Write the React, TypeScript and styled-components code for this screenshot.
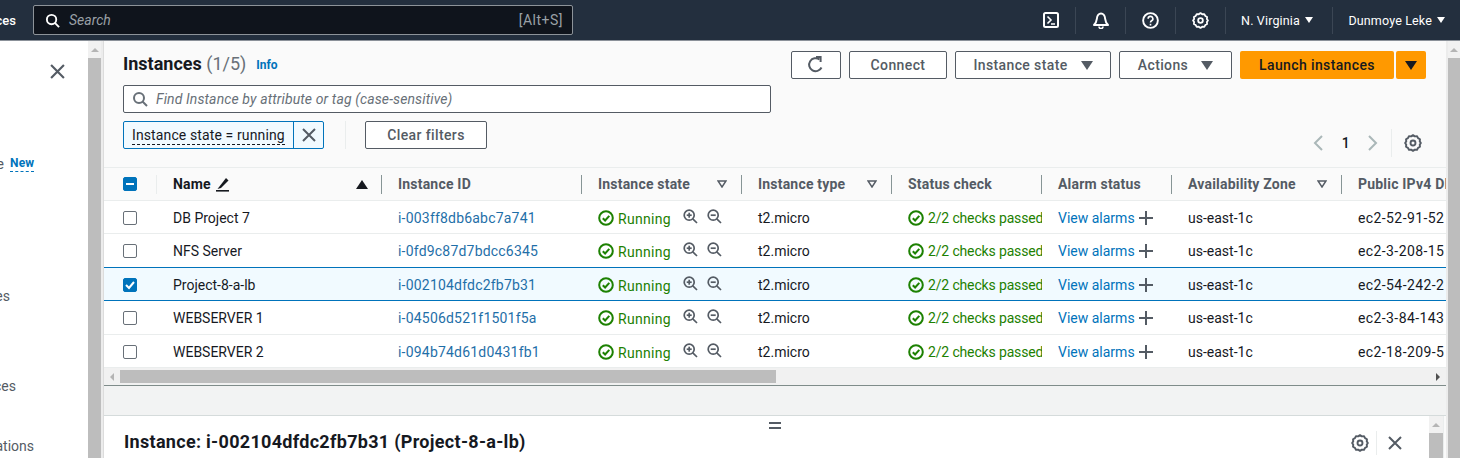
import React from "react";
import styled, { createGlobalStyle } from "styled-components";

const Global = createGlobalStyle`
  html, body { margin: 0; padding: 0; background: #fff; }
  body { font-family: Roboto, "Noto Sans", sans-serif; font-size: 14px; color: #16191f; }
  #root { width: 1460px; height: 458px; overflow: hidden; }
  * { box-sizing: border-box; }
  svg { flex: none; }
`;

const Page = styled.div`
  width: 1460px;
  height: 458px;
  display: flex;
  flex-direction: column;
  overflow: hidden;
`;

/* ---------- top nav ---------- */
const TopNav = styled.header`
  flex: 0 0 41px;
  height: 41px;
  background: #232f3e;
  border-bottom: 1px solid #8b9199;
  display: flex;
  align-items: center;
  color: #fff;
`;
const ClippedService = styled.div`
  width: 16px;
  margin-right: 17px;
  overflow: hidden;
  display: flex;
  justify-content: flex-end;
  font-size: 13px;
  font-weight: 500;
  white-space: nowrap;
`;
const SearchBox = styled.div`
  width: 540px;
  height: 30px;
  background: #0f141c;
  border: 1px solid #8d9399;
  border-radius: 2px;
  display: flex;
  align-items: center;
  padding: 0 9px 0 11px;
  gap: 9px;
  color: #9aa0a6;
  font-size: 14px;
`;
const SearchHint = styled.span`
  font-style: italic;
  flex: 1;
`;
const Shortcut = styled.span`
  color: #9aa0a6;
  font-size: 14px;
  letter-spacing: 0.5px;
`;
const NavRight = styled.div`
  margin-left: auto;
  display: flex;
  align-items: center;
  height: 100%;
  padding-right: 15px;
`;
const NavIcon = styled.div`
  width: 50px;
  height: 27px;
  display: flex;
  align-items: center;
  justify-content: center;
  border-right: 1px solid #3b4654;
`;
const NavMenu = styled.div<{ $w: number; $last?: boolean }>`
  width: ${(p) => p.$w}px;
  height: 27px;
  display: flex;
  align-items: center;
  justify-content: flex-end;
  gap: 5px;
  padding-right: ${(p) => (p.$last ? 0 : 19)}px;
  border-right: ${(p) => (p.$last ? "none" : "1px solid #3b4654")};
  font-size: 12.5px;
  font-weight: 400;
  letter-spacing: 0.15px;
  white-space: nowrap;
`;

/* ---------- body ---------- */
const Body = styled.div`
  flex: 1;
  display: flex;
  min-height: 0;
`;
const Sidebar = styled.aside`
  flex: 0 0 88px;
  background: #fff;
  display: flex;
  flex-direction: column;
  overflow: hidden;
`;
const CloseSide = styled.div`
  height: 64px;
  padding: 23px 0 0 50px;
  color: #545b64;
  line-height: 0;
`;
const SideItem = styled.div<{ $top: number }>`
  margin-top: ${(p) => p.$top}px;
  height: 20px;
  line-height: 20px;
  font-size: 14px;
  color: #545b64;
  white-space: nowrap;
  display: flex;
  align-items: center;
`;
const SideClip = styled.span<{ $w: number }>`
  width: ${(p) => p.$w}px;
  overflow: hidden;
  display: inline-flex;
  justify-content: flex-end;
`;
const NewTag = styled.span`
  margin-left: 6px;
  color: #0073bb;
  font-size: 12px;
  font-weight: 700;
  letter-spacing: 0.2px;
  border-bottom: 1px dashed #0073bb;
  line-height: 15px;
`;
const VScroll = styled.div<{ $right?: boolean }>`
  flex: 0 0 ${(p) => (p.$right ? 14 : 15)}px;
  width: ${(p) => (p.$right ? 14 : 15)}px;
  background: #f1f1f1;
  border-style: solid;
  border-color: #ececec;
  border-width: 0 ${(p) => (p.$right ? "0 0 2px" : "2px 0 0")};
  display: flex;
  flex-direction: column;
  align-items: stretch;
`;
const VScrollArrow = styled.div`
  height: 17px;
  flex: none;
  display: flex;
  justify-content: center;
  align-items: center;
  &::before {
    content: "";
    border-left: 4px solid transparent;
    border-right: 4px solid transparent;
    border-bottom: 4px solid #b5b5b5;
  }
`;
const VScrollThumb = styled.div`
  flex: 1;
  background: #bdbdbd;
`;
const Main = styled.main`
  flex: 0 0 1343px;
  min-width: 0;
  background: #fafafa;
  display: flex;
  flex-direction: column;
  overflow: hidden;
  border-left: 1px solid #dcdcdc;
`;

/* ---------- toolbar ---------- */
const Toolbar = styled.div`
  height: 127px;
  flex: none;
  padding: 10px 20px 0 19px;
  display: grid;
  grid-template-columns: 648px 1fr;
  grid-template-rows: 34px 36px 36px;
`;
const TitleRow = styled.div`
  display: flex;
  align-items: center;
  padding-bottom: 10px;
  gap: 10px;
  grid-column: 1;
`;
const Title = styled.h1`
  margin: 0;
  font-size: 18px;
  font-weight: 700;
  color: #16191f;
  span { font-weight: 400; color: #687078; }
`;
const InfoLink = styled.a`
  font-size: 12px;
  font-weight: 700;
  color: #0073bb;
  padding-top: 3px;
`;
const Actions = styled.div`
  grid-column: 2;
  grid-row: 1;
  display: flex;
  justify-content: flex-end;
  gap: 8px;
  height: 28px;
  margin-left: 20px;
`;
const Btn = styled.button<{ $w: number }>`
  width: ${(p) => p.$w}px;
  height: 28px;
  background: #fff;
  border: 1px solid #545b64;
  border-radius: 2px;
  color: #545b64;
  font: 500 14px Roboto, sans-serif;
  letter-spacing: 0.38px;
  padding: 0;
  display: inline-flex;
  align-items: center;
  justify-content: center;
  gap: 13px;
`;
const LaunchGroup = styled.div`
  display: flex;
  gap: 2px;
`;
const Primary = styled(Btn)`
  background: #ff9900;
  border: none;
  color: #16191f;
`;
const Caret = styled.i<{ $c?: string; $s?: number }>`
  display: inline-block;
  width: 0;
  height: 0;
  border-left: ${(p) => p.$s ?? 6}px solid transparent;
  border-right: ${(p) => p.$s ?? 6}px solid transparent;
  border-top: ${(p) => (p.$s ?? 6) * 1.5}px solid ${(p) => p.$c ?? "#545b64"};
`;
const FindBox = styled.div`
  grid-column: 1;
  grid-row: 2;
  height: 28px;
  background: #fff;
  border: 1px solid #545b64;
  border-radius: 2px;
  display: flex;
  align-items: center;
  gap: 8px;
  padding: 0 8px;
  color: #687078;
  font-style: italic;
  letter-spacing: 0.12px;
`;
const FilterRow = styled.div`
  grid-column: 1;
  grid-row: 3;
  display: flex;
  align-items: flex-start;
`;
const Token = styled.div`
  width: 201px;
  height: 28px;
  background: #f1faff;
  border: 1px solid #0073bb;
  border-radius: 2px;
  display: flex;
  align-items: center;
`;
const TokenText = styled.div`
  flex: 1;
  padding: 2px 0 0 8px;
  white-space: nowrap;
  letter-spacing: 0.12px;
  span { border-bottom: 1px dashed #16191f; line-height: 17px; display: inline-block; }
`;
const TokenClose = styled.div`
  width: 30px;
  height: 100%;
  border-left: 1px solid #0073bb;
  display: flex;
  align-items: center;
  justify-content: center;
  color: #545b64;
`;
const FilterSep = styled.div`
  width: 1px;
  height: 28px;
  background: #eaeded;
  margin: 0 19px 0 21px;
`;
const ClearBtn = styled(Btn)``;
const Pager = styled.div`
  grid-column: 2;
  grid-row: 3;
  display: flex;
  align-items: center;
  justify-content: flex-end;
  height: 28px;
  margin-top: 8px;
  color: #16191f;
  font-weight: 500;
`;
const PagerItem = styled.div`
  width: 27.5px;
  display: flex;
  justify-content: center;
`;
const PagerGear = styled.div`
  margin-left: 4px;
  padding-left: 8px;
  width: 35px;
  height: 28px;
  border-left: 1px solid #eaeded;
  display: flex;
  align-items: center;
  justify-content: center;
  color: #545b64;
`;

/* ---------- table ---------- */
const cols = "53px 225px 200px 160px 150px 150px 130px 170px 200px";
const TableWrap = styled.div`
  flex: none;
  border-top: 1px solid #eaeded;
  overflow: hidden;
  margin-top: -1px;
`;
const HeadRow = styled.div`
  display: grid;
  grid-template-columns: ${cols};
  height: 33px;
  background: #fafafa;
  border-bottom: 1px solid #eaeded;
  color: #545b64;
  font-weight: 700;
  letter-spacing: 0.2px;
`;
const HeadCell = styled.div<{ $sep?: boolean; $pr?: number }>`
  padding: 0 ${(p) => p.$pr ?? 8}px 0 16px;
  display: flex;
  align-items: center;
  justify-content: space-between;
  white-space: nowrap;
  overflow: hidden;
  position: relative;
  &::after {
    content: "";
    display: ${(p) => (p.$sep ? "block" : "none")};
    position: absolute;
    right: 0;
    top: 7px;
    height: 19px;
    width: 1px;
    background: #879596;
  }
`;
const NameHead = styled.span`
  display: inline-flex;
  align-items: center;
  gap: 4px;
  color: #16191f;
`;
const Row = styled.div<{ $sel?: boolean; $h: number }>`
  display: grid;
  grid-template-columns: ${cols};
  height: ${(p) => p.$h}px;
  padding-top: ${(p) => (p.$h === 33 ? 2 : 0)}px;
  background: ${(p) => (p.$sel ? "#f1faff" : "#fff")};
  border-bottom: 1px solid ${(p) => (p.$sel ? "#0073bb" : "#eaeded")};
  box-shadow: ${(p) => (p.$sel ? "0 -1px 0 #0073bb" : "none")};
  position: relative;
`;
const Cell = styled.div`
  padding: 0 0 0 16px;
  display: flex;
  align-items: center;
  white-space: nowrap;
  overflow: hidden;
  color: #16191f;
`;
const PubCell = styled(Cell)`
  letter-spacing: 0.4px;
`;
const CheckCell = styled.div`
  display: flex;
  align-items: center;
  padding-left: 19px;
`;
const HeadCheckCell = styled(CheckCell)`
  position: relative;
  &::after {
    content: "";
    position: absolute;
    right: 0;
    top: 7px;
    height: 19px;
    width: 1px;
    background: #eaeded;
  }
`;
const Box = styled.div<{ $on?: boolean }>`
  width: 14px;
  height: 14px;
  border-radius: 2px;
  border: 1px solid ${(p) => (p.$on ? "#0073bb" : "#687078")};
  background: ${(p) => (p.$on ? "#0073bb" : "#fff")};
  display: flex;
  align-items: center;
  justify-content: center;
`;
const IdLink = styled.a`
  color: #1f6fa8;
  letter-spacing: 0.2px;
`;
const RunningText = styled.span`
  color: #1d8102;
  margin: 2px 0 0 4px;
  letter-spacing: 0.3px;
`;
const ChecksText = styled.span`
  color: #1d8102;
  margin-left: 4px;
  letter-spacing: -0.15px;
`;
const Zooms = styled.span`
  display: inline-flex;
  gap: 9px;
  margin-left: 12px;
  color: #545b64;
  margin-top: -3px;
`;
const AlarmLink = styled.a`
  color: #0073bb;
  margin-right: 4px;
`;
const HScroll = styled.div`
  height: 17px;
  background: #f1f1f1;
  display: flex;
  align-items: center;
  flex: none;
`;
const HArrow = styled.div<{ $dir: "l" | "r" }>`
  width: 16px;
  height: 16px;
  display: flex;
  align-items: center;
  justify-content: center;
  &::before {
    content: "";
    border-top: 4px solid transparent;
    border-bottom: 4px solid transparent;
    border-right: ${(p) => (p.$dir === "l" ? "4px solid #b5b5b5" : "none")};
    border-left: ${(p) => (p.$dir === "r" ? "4px solid #505050" : "none")};
  }
`;
const HThumb = styled.div`
  width: 656px;
  height: 13px;
  background: #bdbdbd;
`;
const HTrack = styled.div`
  flex: 1;
`;
const Gutter = styled.div`
  flex: 0 0 31px;
  background: #f2f3f3;
  border-top: 1px solid #7f8c8a;
  border-bottom: 1px solid #d5dbdb;
`;
const Detail = styled.section`
  flex: 1;
  background: #fff;
  position: relative;
  margin-right: 2px;
  display: flex;
  align-items: flex-start;
  overflow: hidden;
  border-right: 1px solid #eaeded;
`;
const Handle = styled.div`
  position: absolute;
  left: 665px;
  top: 6px;
  width: 12px;
  height: 7px;
  border-top: 2px solid #545b64;
  border-bottom: 2px solid #545b64;
`;
const DetailTitle = styled.h2`
  margin: 15px 0 0 20px;
  font-size: 18px;
  font-weight: 700;
  letter-spacing: 0.3px;
  white-space: nowrap;
  line-height: 22px;
`;
const DetailTools = styled.div`
  margin-left: auto;
  display: flex;
  align-items: center;
  height: 24px;
  margin-top: 15px;
  color: #545b64;
`;
const DetailGear = styled.div`
  width: 34px;
  height: 24px;
  display: flex;
  align-items: center;
  justify-content: center;
  border-right: 1px solid #eaeded;
`;
const DetailClose = styled.div`
  width: 36px;
  display: flex;
  justify-content: center;
`;
const DetailScroll = styled.div`
  width: 14px;
  height: 43px;
  margin-left: 16px;
  background: #f1f1f1;
  display: flex;
  flex-direction: column;
`;

/* ---------- icons ---------- */
const Gear = ({ s = 18, c = "currentColor", w = 2 }: { s?: number; c?: string; w?: number }) => (
  <svg width={s} height={s} viewBox="0 0 16 16" fill="none" stroke={c} strokeWidth={(w * 16) / 18 * 0.95} strokeLinejoin="round">
    <path d="M8 1l1.6 1.1 2-.1.9 1.7 1.7 1-.2 1.9L15 8l-1 1.4.2 1.9-1.7 1-.9 1.7-2-.1L8 15l-1.6-1.1-2 .1-.9-1.7-1.7-1 .2-1.9L1 8l1-1.4-.2-1.9 1.7-1 .9-1.7 2 .1z" />
    <circle cx="8" cy="8" r="2.2" />
  </svg>
);
const Cross = ({ s = 14, w = 2 }: { s?: number; w?: number }) => (
  <svg width={s} height={s} viewBox="0 0 14 14" stroke="currentColor" strokeWidth={w} fill="none">
    <path d="M1 1l12 12M13 1L1 13" />
  </svg>
);
const Mag = ({ s = 16, c = "currentColor", w = 2 }: { s?: number; c?: string; w?: number }) => (
  <svg width={s} height={s} viewBox="0 0 16 16" fill="none" stroke={c} strokeWidth={w}>
    <circle cx="7" cy="7" r="5" />
    <path d="M10.5 10.5L15 15" />
  </svg>
);
const ZoomIcon = ({ plus }: { plus?: boolean }) => (
  <svg width="15" height="15" viewBox="0 0 15 15" fill="none" stroke="currentColor" strokeWidth="1.7">
    <circle cx="6.2" cy="6.2" r="5" />
    <path d="M9.8 9.8L14 14" />
    <path d="M3.7 6.2h5" />
    {plus && <path d="M6.2 3.7v5" />}
  </svg>
);
const OkIcon = () => (
  <svg width="16" height="16" viewBox="0 0 16 16" fill="none" stroke="#1d8102" strokeWidth="2">
    <circle cx="8" cy="8" r="6.8" />
    <path d="M4.8 8.2l2.3 2.3 4.2-4.6" />
  </svg>
);
const Plus = () => (
  <svg width="14" height="14" viewBox="0 0 14 14" stroke="#545b64" strokeWidth="2">
    <path d="M7 0v14M0 7h14" />
  </svg>
);
const Chev = ({ dir }: { dir: "l" | "r" }) => (
  <svg width="12" height="18" viewBox="0 0 12 18" fill="none" stroke="#aab7b8" strokeWidth="2">
    <path d={dir === "l" ? "M10 2L3 9l7 7" : "M2 2l7 7-7 7"} />
  </svg>
);
const SortDown = () => (
  <svg width="10" height="8" viewBox="0 0 10 8" fill="none" stroke="#545b64" strokeWidth="1.5">
    <path d="M1 1h8L5 7z" />
  </svg>
);
const SortUp = () => (
  <svg width="12" height="9" viewBox="0 0 12 9" fill="#16191f">
    <path d="M6 0l6 9H0z" />
  </svg>
);
const Pencil = () => (
  <svg width="15" height="15" viewBox="0 0 15 15" fill="#16191f">
    <path d="M11 1l2.5 2.5L6 11l-3.5 1z" />
    <rect x="1" y="13" width="13" height="1.6" />
  </svg>
);
const Refresh = () => (
  <svg width="18" height="18" viewBox="0 0 18 18" fill="none" stroke="#545b64" strokeWidth="2">
    <path d="M14.5 11.5A6.5 6.5 0 1 1 12.5 3.5" />
    <path d="M9 1h4.6v5" strokeLinejoin="miter" />
  </svg>
);
const Terminal = () => (
  <svg width="16" height="16" viewBox="0 0 16 16" fill="none" stroke="#fff" strokeWidth="2">
    <rect x="1" y="1" width="14" height="14" rx="1.5" />
    <path d="M4.5 4.5L8 8l-3.5 3.5M8 12h4" strokeWidth="1.6" />
  </svg>
);
const Bell = () => (
  <svg width="18" height="18" viewBox="0 0 18 18" fill="none" stroke="#fff" strokeWidth="2" strokeLinejoin="round">
    <path d="M2 14c2-2 2.5-3 2.800-6C5 4.500 7 2.500 9 2.500S13 4.500 13.200 8c.3 3 .8 4 2.800 6z" />
    <path d="M7 15.500a2 2 0 0 0 4 0" strokeWidth="1.600" />
  </svg>
);
const Help = () => (
  <svg width="17" height="17" viewBox="0 0 18 18" fill="none" stroke="#fff" strokeWidth="2">
    <circle cx="9" cy="9" r="7.800" />
    <path d="M6.500 7.200a2.500 2.500 0 1 1 3.700 2.100c-.8.5-1.200 1-1.200 1.900" strokeWidth="1.700" />
    <path d="M9 12.500v1.800" strokeWidth="1.700" />
  </svg>
);

const rows = [
  { n: "DB Project 7", id: "i-003ff8db6abc7a741", ip: "ec2-52-91-52", h: 33 },
  { n: "NFS Server", id: "i-0fd9c87d7bdcc6345", ip: "ec2-3-208-15", h: 34 },
  { n: "Project-8-a-lb", id: "i-002104dfdc2fb7b31", ip: "ec2-54-242-2", h: 33, sel: true },
  { n: "WEBSERVER 1", id: "i-04506d521f1501f5a", ip: "ec2-3-84-143", h: 34 },
  { n: "WEBSERVER 2", id: "i-094b74d61d0431fb1", ip: "ec2-18-209-5", h: 33 },
];

export default function App() {
  return (
    <Page>
      <Global />
      <TopNav>
        <ClippedService>Services</ClippedService>
        <SearchBox>
          <Mag s={15} c="#fff" />
          <SearchHint>Search</SearchHint>
          <Shortcut>[Alt+S]</Shortcut>
        </SearchBox>
        <NavRight>
          <NavIcon><Terminal /></NavIcon>
          <NavIcon><Bell /></NavIcon>
          <NavIcon><Help /></NavIcon>
          <NavIcon><Gear s={17} c="#fff" /></NavIcon>
          <NavMenu $w={107}>N. Virginia <Caret $c="#fff" $s={4} /></NavMenu>
          <NavMenu $w={112} $last>Dunmoye Leke <Caret $c="#fff" $s={4} /></NavMenu>
        </NavRight>
      </TopNav>
      <Body>
        <Sidebar>
          <CloseSide><Cross s={15} /></CloseSide>
          <SideItem $top={49}><SideClip $w={4}>Console</SideClip><NewTag>New</NewTag></SideItem>
          <SideItem $top={112}><SideClip $w={10}>Images</SideClip></SideItem>
          <SideItem $top={70}><SideClip $w={16}>Instances</SideClip></SideItem>
          <SideItem $top={40}><SideClip $w={34}>Destinations</SideClip></SideItem>
        </Sidebar>
        <VScroll>
          <VScrollArrow />
          <VScrollThumb />
        </VScroll>
        <Main>
          <Toolbar>
            <TitleRow>
              <Title>Instances <span>(1/5)</span></Title>
              <InfoLink>Info</InfoLink>
            </TitleRow>
            <Actions>
              <Btn $w={50}><Refresh /></Btn>
              <Btn $w={98}>Connect</Btn>
              <Btn $w={156}>Instance state <Caret /></Btn>
              <Btn $w={113}>Actions <Caret /></Btn>
              <LaunchGroup>
                <Primary $w={154}>Launch instances</Primary>
                <Primary $w={30}><Caret $c="#16191f" /></Primary>
              </LaunchGroup>
            </Actions>
            <FindBox><Mag s={16} c="#687078" />Find Instance by attribute or tag (case-sensitive)</FindBox>
            <FilterRow>
              <Token>
                <TokenText><span>Instance state = running</span></TokenText>
                <TokenClose><Cross s={14} /></TokenClose>
              </Token>
              <FilterSep />
              <ClearBtn $w={122}>Clear filters</ClearBtn>
            </FilterRow>
            <Pager>
              <PagerItem><Chev dir="l" /></PagerItem>
              <PagerItem>1</PagerItem>
              <PagerItem><Chev dir="r" /></PagerItem>
              <PagerGear><Gear /></PagerGear>
            </Pager>
          </Toolbar>
          <TableWrap>
            <HeadRow>
              <HeadCheckCell>
                <Box $on>
                  <svg width="10" height="10" viewBox="0 0 10 10" stroke="#fff" strokeWidth="2"><path d="M1 5h8" /></svg>
                </Box>
              </HeadCheckCell>
              <HeadCell $sep $pr={14}><NameHead>Name <Pencil /></NameHead><SortUp /></HeadCell>
              <HeadCell $sep>Instance ID</HeadCell>
              <HeadCell $sep $pr={15}>Instance state <SortDown /></HeadCell>
              <HeadCell $sep $pr={15}>Instance type <SortDown /></HeadCell>
              <HeadCell $sep>Status check</HeadCell>
              <HeadCell $sep>Alarm status</HeadCell>
              <HeadCell $sep $pr={15}>Availability Zone <SortDown /></HeadCell>
              <HeadCell>Public IPv4 DNS</HeadCell>
            </HeadRow>
            {rows.map((r) => (
              <Row key={r.id} $sel={r.sel} $h={r.h}>
                <CheckCell>
                  <Box $on={r.sel}>
                    {r.sel && (
                      <svg width="12" height="12" viewBox="0 0 12 12" fill="none" stroke="#fff" strokeWidth="2"><path d="M2 6l3 3 5-6" /></svg>
                    )}
                  </Box>
                </CheckCell>
                <Cell>{r.n}</Cell>
                <Cell><IdLink>{r.id}</IdLink></Cell>
                <Cell>
                  <OkIcon /><RunningText>Running</RunningText>
                  <Zooms><ZoomIcon plus /><ZoomIcon /></Zooms>
                </Cell>
                <Cell>t2.micro</Cell>
                <Cell><OkIcon /><ChecksText>2/2 checks passed</ChecksText></Cell>
                <Cell><AlarmLink>View alarms</AlarmLink><Plus /></Cell>
                <Cell>us-east-1c</Cell>
                <PubCell>{r.ip}</PubCell>
              </Row>
            ))}
          </TableWrap>
          <HScroll>
            <HArrow $dir="l" />
            <HThumb />
            <HTrack />
            <HArrow $dir="r" />
          </HScroll>
          <Gutter />
          <Detail>
            <Handle />
            <DetailTitle>Instance: i-002104dfdc2fb7b31 (Project-8-a-lb)</DetailTitle>
            <DetailTools>
              <DetailGear><Gear /></DetailGear>
              <DetailClose><Cross s={14} /></DetailClose>
            </DetailTools>
            <DetailScroll>
              <VScrollArrow />
              <VScrollThumb />
            </DetailScroll>
          </Detail>
        </Main>
        <VScroll $right>
          <VScrollArrow />
          <VScrollThumb />
        </VScroll>
      </Body>
    </Page>
  );
}
